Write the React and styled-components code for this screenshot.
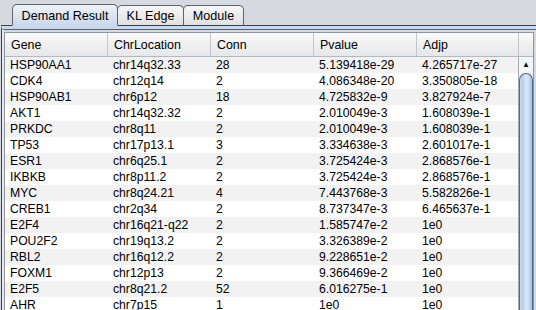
import React from "react";
import styled, { createGlobalStyle } from "styled-components";

const Global = createGlobalStyle`
  html, body { margin: 0; padding: 0; background: #d6d9df; }
  body { font-family: "Liberation Sans", Arial, sans-serif; }
`;

const Window = styled.div`
  width: 536px;
  height: 310px;
  overflow: hidden;
  background: #d6d9df;
  display: flex;
  flex-direction: column;
  font-family: "Liberation Sans", Arial, sans-serif;
  color: #000;
`;

const TabBar = styled.div`
  display: flex;
  align-items: flex-end;
  height: 25px;
  margin-left: 1px;
  padding-left: 11px;
  border-bottom: 1px solid #3d4148;
`;

const Tab = styled.div`
  box-sizing: border-box;
  width: ${(p) => p.$w}px;
  height: ${(p) => (p.$active ? 22 : 21)}px;
  margin-bottom: -1px;
  margin-left: ${(p) => (p.$first ? 0 : -1)}px;
  display: flex;
  align-items: center;
  justify-content: center;
  font-size: 12.6px;
  white-space: nowrap;
  border: 1px solid #5e636b;
  border-bottom: 1px solid ${(p) => (p.$active ? "#c9d9ed" : "#3d4148")};
  border-radius: 5px 5px 0 0;
  background: ${(p) =>
    p.$active
      ? "linear-gradient(#eef2f7, #dbe4ef 55%, #c9d9ed)"
      : "linear-gradient(#f6f6f7, #e9eaec 60%, #dfe1e4)"};
  position: relative;
  z-index: ${(p) => (p.$active ? 2 : 1)};
  padding-top: 1px;
`;

const Panel = styled.div`
  flex: 1;
  margin-left: 1px;
  border-left: 1px solid #3d4148;
  border-top: 3px solid #c9d9ed;
  display: flex;
  flex-direction: column;
  min-height: 0;
`;

const InnerFrame = styled.div`
  flex: 1;
  border-top: 1px solid #56606d;
  border-left: 2px solid #e4e8ed;
  padding: 2px 2px 0 0;
  display: flex;
  flex-direction: column;
  min-height: 0;
`;

const ScrollPane = styled.div`
  flex: 1;
  border: 1px solid #8e959e;
  border-bottom: none;
  background: #fff;
  display: flex;
  flex-direction: column;
  min-height: 0;
  overflow: hidden;
`;

const HeaderRow = styled.div`
  display: flex;
  height: 23px;
  border-bottom: 1px solid #b4b9c0;
  background: linear-gradient(#fbfbfb, #f0f0f1 50%, #e6e7e9);
`;

const HeaderCell = styled.div`
  box-sizing: border-box;
  width: ${(p) => p.$w}px;
  flex: ${(p) => (p.$fill ? 1 : "none")};
  border-right: ${(p) => (p.$fill ? "none" : "1px solid #c2c6cc")};
  padding-left: 6px;
  display: flex;
  align-items: center;
  font-size: 12.4px;
`;

const Body = styled.div`
  flex: 1;
  display: flex;
  min-height: 0;
`;

const Rows = styled.div`
  width: 513px;
  border-right: 1px solid #a3a9b1;
  display: flex;
  flex-direction: column;
`;

const Row = styled.div`
  display: flex;
  height: 16px;
  flex: none;
  background: ${(p) => (p.$alt ? "#f2f2f2" : "#ffffff")};
`;

const Cell = styled.div`
  box-sizing: border-box;
  width: ${(p) => p.$w}px;
  padding-left: 5px;
  font-size: 12.2px;
  line-height: 16px;
  white-space: nowrap;
  overflow: hidden;
`;

const ScrollBar = styled.div`
  flex: 1;
  display: flex;
  flex-direction: column;
  background: #eef0f3;
`;

const ArrowButton = styled.div`
  height: 15px;
  flex: none;
  display: flex;
  align-items: center;
  justify-content: center;
  font-size: 8px;
  color: #111;
  background: #f4f5f7;
  padding-bottom: 1px;
`;

const Thumb = styled.div`
  flex: 1;
  box-sizing: border-box;
  border: 1px solid #50698c;
  border-bottom: none;
  border-radius: 7px 7px 0 0;
  background: linear-gradient(
    to right,
    #d3dbe5 0%,
    #b8cde6 18%,
    #c9dbf0 35%,
    #dbe8f7 55%,
    #c8dbf0 75%,
    #a2bbd9 100%
  );
`;

const columns = [103, 103, 103, 103, 101];
const headers = ["Gene", "ChrLocation", "Conn", "Pvalue", "Adjp"];

const data = [
  ["HSP90AA1", "chr14q32.33", "28", "5.139418e-29", "4.265717e-27"],
  ["CDK4", "chr12q14", "2", "4.086348e-20", "3.350805e-18"],
  ["HSP90AB1", "chr6p12", "18", "4.725832e-9", "3.827924e-7"],
  ["AKT1", "chr14q32.32", "2", "2.010049e-3", "1.608039e-1"],
  ["PRKDC", "chr8q11", "2", "2.010049e-3", "1.608039e-1"],
  ["TP53", "chr17p13.1", "3", "3.334638e-3", "2.601017e-1"],
  ["ESR1", "chr6q25.1", "2", "3.725424e-3", "2.868576e-1"],
  ["IKBKB", "chr8p11.2", "2", "3.725424e-3", "2.868576e-1"],
  ["MYC", "chr8q24.21", "4", "7.443768e-3", "5.582826e-1"],
  ["CREB1", "chr2q34", "2", "8.737347e-3", "6.465637e-1"],
  ["E2F4", "chr16q21-q22", "2", "1.585747e-2", "1e0"],
  ["POU2F2", "chr19q13.2", "2", "3.326389e-2", "1e0"],
  ["RBL2", "chr16q12.2", "2", "9.228651e-2", "1e0"],
  ["FOXM1", "chr12p13", "2", "9.366469e-2", "1e0"],
  ["E2F5", "chr8q21.2", "52", "6.016275e-1", "1e0"],
  ["AHR", "chr7p15", "1", "1e0", "1e0"],
];

const tabs = [
  { label: "Demand Result", w: 106 },
  { label: "KL Edge", w: 67 },
  { label: "Module", w: 61 },
];

export default function App() {
  return (
    <Window>
      <Global />
      <TabBar>
        {tabs.map((t, i) => (
          <Tab key={t.label} $w={t.w} $active={i === 0} $first={i === 0}>
            {t.label}
          </Tab>
        ))}
      </TabBar>
      <Panel>
        <InnerFrame>
          <ScrollPane>
            <HeaderRow>
              {headers.map((h, i) => (
                <HeaderCell key={h} $w={i === 4 ? 102 : 103}>
                  {h}
                </HeaderCell>
              ))}
              <HeaderCell $fill />
            </HeaderRow>
            <Body>
              <Rows>
                {data.map((r, i) => (
                  <Row key={r[0]} $alt={i % 2 === 0}>
                    {r.map((v, j) => (
                      <Cell key={j} $w={columns[j]}>
                        {v}
                      </Cell>
                    ))}
                  </Row>
                ))}
              </Rows>
              <ScrollBar>
                <ArrowButton>▲</ArrowButton>
                <Thumb />
              </ScrollBar>
            </Body>
          </ScrollPane>
        </InnerFrame>
      </Panel>
    </Window>
  );
}
